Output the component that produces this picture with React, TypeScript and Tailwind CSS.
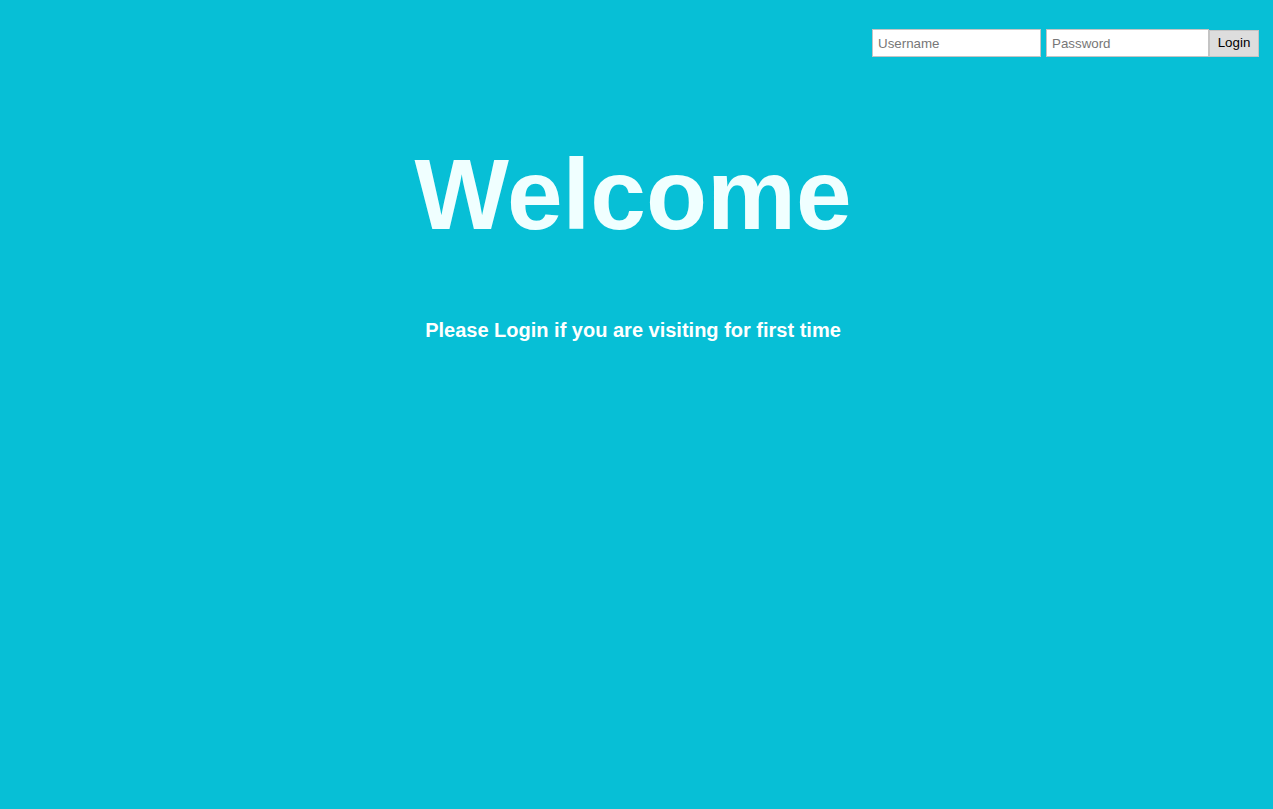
export default function App() {
    return (
        <div className="min-h-[809px] bg-[#07bfd6] font-['Liberation_Sans',Arial,sans-serif]">
            {/* Login form */}
            <div className="flex justify-end pt-[29px] pr-[14px]">
                <form className="flex items-center" onSubmit={(e) => e.preventDefault()}>
                    <input
                        type="text"
                        placeholder="Username"
                        className="w-[169px] h-[28px] px-[5px] bg-white border border-[#c4c4c4] text-[13.33px] text-black placeholder:text-[#777] outline-none"
                    />
                    <input
                        type="password"
                        placeholder="Password"
                        className="ml-[5px] w-[163px] h-[28px] px-[5px] bg-white border border-[#c4c4c4] text-[13.33px] text-black placeholder:text-[#777] outline-none"
                    />
                    <button
                        type="submit"
                        className="w-[50px] h-[27px] bg-[#dddddd] border border-[#c4c4c4] text-[13.33px] text-black"
                    >
                        Login
                    </button>
                </form>
            </div>

            {/* Heading */}
            <div className="pr-[7px]">
                <h1 className="mt-[87px] text-center text-[100px] leading-none font-bold text-[#f0ffff]">
                    Welcome
                </h1>
                <p className="mt-[76px] text-center text-[20px] leading-none font-bold text-white">
                    Please Login if you are visiting for first time
                </p>
            </div>
        </div>
    );
}
